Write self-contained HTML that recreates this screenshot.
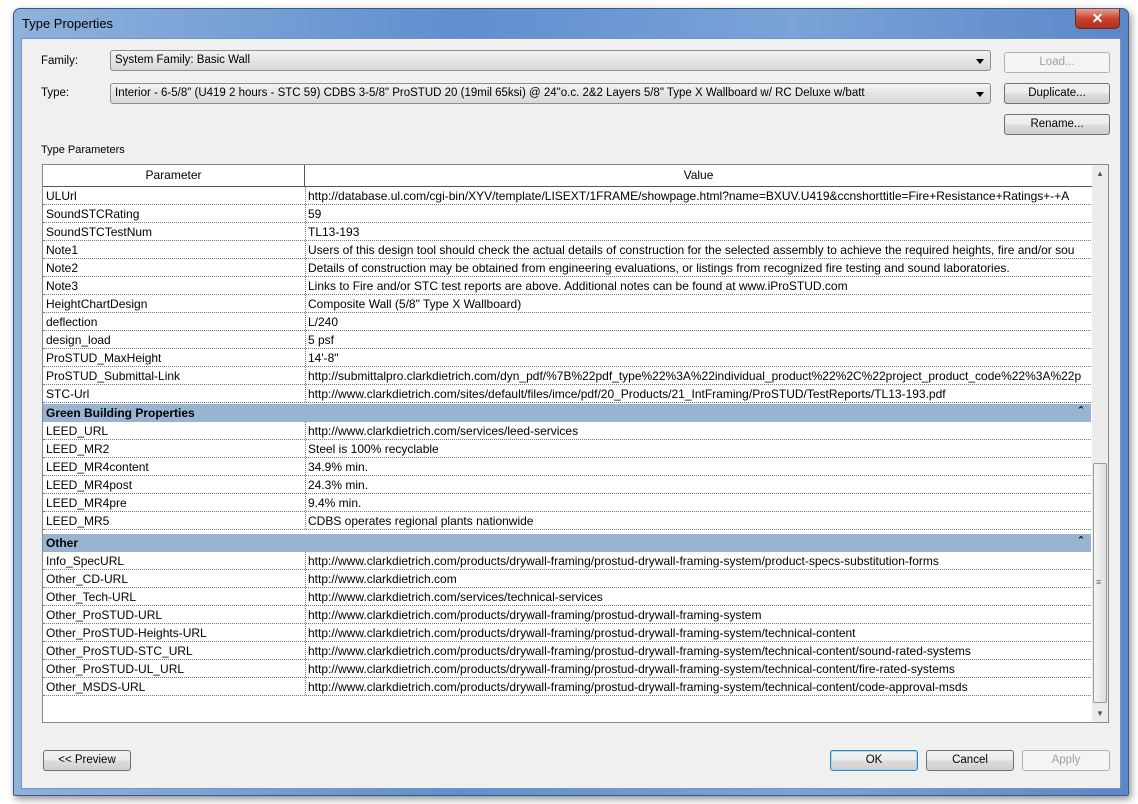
<!DOCTYPE html>
<html><head><style>
*{box-sizing:border-box}
body{margin:0;width:1138px;height:804px;background:#fff;font-family:"Liberation Sans",sans-serif;font-size:11.5px;color:#000;position:relative;overflow:hidden}
.win{position:absolute;left:13px;top:8px;width:1116px;height:788px;border:1px solid #3a5a85;border-radius:7px 7px 2px 2px;background:linear-gradient(90deg,#8fb2dc,#5f8fcf 40%,#7aa3d8 70%,#5a87c8);box-shadow:2px 3px 8px rgba(0,0,0,.45)}
.title{position:absolute;left:8px;top:7px;font-size:13px;color:#000}
.close{position:absolute;right:8px;top:0;width:45px;height:20px;border:1px solid #6b2a20;border-top:none;border-radius:0 0 5px 5px;background:linear-gradient(#e8a090,#c8452f 50%,#b0301c);color:#fff;font-weight:bold;text-align:center;font-size:14px;line-height:18px}
.client{position:absolute;left:7px;top:29px;width:1100px;height:751px;background:#f0f0f0;border:1px solid #7a93b8}
.a{position:absolute}
.combo{position:absolute;left:110px;width:881px;height:21px;border:1px solid #8e8f8f;border-radius:3px;background:linear-gradient(#f4f4f4,#e4e4e4 50%,#d8d8d8);padding:3px 4px;white-space:nowrap;font-size:11.5px}
.combo:after{content:"";position:absolute;right:6px;top:8px;border:4px solid transparent;border-top:5px solid #000}
.btn{position:absolute;height:21px;border:1px solid #707070;border-radius:3px;background:linear-gradient(#f2f2f2,#ebebeb 50%,#dddddd 51%,#cfcfcf);text-align:center;line-height:19px;font-size:11.5px}
.dis{border-color:#adb2b5;background:#f4f4f4;color:#a0a0a0}
.tbl{position:absolute;left:42px;top:164px;width:1067px;height:559px;border:1px solid #828790;background:#fff;overflow:hidden;font-size:12px}
.hdr{position:absolute;left:0;top:0;height:22px;width:1049px;border-bottom:1px solid #555;background:#fff}
.hdr div{position:absolute;top:0;height:21px;line-height:20px;text-align:center}
.row{position:absolute;left:0;width:1048px;height:18px;border-bottom:1px dotted #777;white-space:nowrap}
.row .p{position:absolute;left:3px;top:2px}
.row .v{position:absolute;left:262px;top:0;height:17px;border-left:1px dotted #777;padding:2px 0 0 2px;width:786px;overflow:hidden}
.grp{position:absolute;left:0;width:1048px;height:18px;background:#99b4d1;font-weight:bold;padding:2px 3px}
.grp:after{content:"\02C6";position:absolute;right:8px;top:0;font-size:13px}
.sb{position:absolute;left:1049px;top:0;width:16px;height:557px;background:#ececec}
.thumb{position:absolute;left:1050px;top:298px;width:14px;height:240px;border:1px solid #999;border-radius:2px;background:linear-gradient(90deg,#f4f4f4,#dedede)}
</style></head><body>
<div class="win">
<div class="title">Type Properties</div>
<div class="close">✕</div>
<div class="client"></div>
</div>
<div class="a" style="left:41px;top:55px">Family:</div>
<div class="a" style="left:41px;top:87px">Type:</div>
<div class="combo" style="top:50px">System Family: Basic Wall</div>
<div class="combo" style="top:83px">Interior - 6-5/8" (U419 2 hours - STC 59) CDBS 3-5/8" ProSTUD 20 (19mil 65ksi) @ 24"o.c. 2&amp;2 Layers 5/8" Type X Wallboard w/ RC Deluxe w/batt</div>
<div class="btn dis" style="left:1004px;top:52px;width:106px">Load...</div>
<div class="btn" style="left:1004px;top:83px;width:106px">Duplicate...</div>
<div class="btn" style="left:1004px;top:114px;width:106px">Rename...</div>
<div class="a" style="left:41px;top:144px;font-size:11px">Type Parameters</div>
<div class="tbl">
<div class="hdr"><div style="left:0;width:262px;border-right:1px solid #555">Parameter</div><div style="left:262px;width:787px">Value</div></div>
<div class="row" style="top:22px"><span class="p">ULUrl</span><span class="v">http://database.ul.com/cgi-bin/XYV/template/LISEXT/1FRAME/showpage.html?name=BXUV.U419&amp;ccnshorttitle=Fire+Resistance+Ratings+-+A</span></div>
<div class="row" style="top:40px"><span class="p">SoundSTCRating</span><span class="v">59</span></div>
<div class="row" style="top:58px"><span class="p">SoundSTCTestNum</span><span class="v">TL13-193</span></div>
<div class="row" style="top:76px"><span class="p">Note1</span><span class="v">Users of this design tool should check the actual details of construction for the selected assembly to achieve the required heights, fire and/or sou</span></div>
<div class="row" style="top:94px"><span class="p">Note2</span><span class="v">Details of construction may be obtained from engineering evaluations, or listings from recognized fire testing and sound laboratories.</span></div>
<div class="row" style="top:112px"><span class="p">Note3</span><span class="v">Links to Fire and/or STC test reports are above. Additional notes can be found at www.iProSTUD.com</span></div>
<div class="row" style="top:130px"><span class="p">HeightChartDesign</span><span class="v">Composite Wall (5/8" Type X Wallboard)</span></div>
<div class="row" style="top:148px"><span class="p">deflection</span><span class="v">L/240</span></div>
<div class="row" style="top:166px"><span class="p">design_load</span><span class="v">5 psf</span></div>
<div class="row" style="top:184px"><span class="p">ProSTUD_MaxHeight</span><span class="v">14'-8"</span></div>
<div class="row" style="top:202px"><span class="p">ProSTUD_Submittal-Link</span><span class="v">http://submittalpro.clarkdietrich.com/dyn_pdf/%7B%22pdf_type%22%3A%22individual_product%22%2C%22project_product_code%22%3A%22p</span></div>
<div class="row" style="top:220px"><span class="p">STC-Url</span><span class="v">http://www.clarkdietrich.com/sites/default/files/imce/pdf/20_Products/21_IntFraming/ProSTUD/TestReports/TL13-193.pdf</span></div>
<div class="grp" style="top:239px">Green Building Properties</div>
<div class="row" style="top:257px"><span class="p">LEED_URL</span><span class="v">http://www.clarkdietrich.com/services/leed-services</span></div>
<div class="row" style="top:275px"><span class="p">LEED_MR2</span><span class="v">Steel is 100% recyclable</span></div>
<div class="row" style="top:293px"><span class="p">LEED_MR4content</span><span class="v">34.9% min.</span></div>
<div class="row" style="top:311px"><span class="p">LEED_MR4post</span><span class="v">24.3% min.</span></div>
<div class="row" style="top:329px"><span class="p">LEED_MR4pre</span><span class="v">9.4% min.</span></div>
<div class="row" style="top:347px"><span class="p">LEED_MR5</span><span class="v">CDBS operates regional plants nationwide</span></div>
<div class="grp" style="top:369px">Other</div>
<div class="row" style="top:387px"><span class="p">Info_SpecURL</span><span class="v">http://www.clarkdietrich.com/products/drywall-framing/prostud-drywall-framing-system/product-specs-substitution-forms</span></div>
<div class="row" style="top:405px"><span class="p">Other_CD-URL</span><span class="v">http://www.clarkdietrich.com</span></div>
<div class="row" style="top:423px"><span class="p">Other_Tech-URL</span><span class="v">http://www.clarkdietrich.com/services/technical-services</span></div>
<div class="row" style="top:441px"><span class="p">Other_ProSTUD-URL</span><span class="v">http://www.clarkdietrich.com/products/drywall-framing/prostud-drywall-framing-system</span></div>
<div class="row" style="top:459px"><span class="p">Other_ProSTUD-Heights-URL</span><span class="v">http://www.clarkdietrich.com/products/drywall-framing/prostud-drywall-framing-system/technical-content</span></div>
<div class="row" style="top:477px"><span class="p">Other_ProSTUD-STC_URL</span><span class="v">http://www.clarkdietrich.com/products/drywall-framing/prostud-drywall-framing-system/technical-content/sound-rated-systems</span></div>
<div class="row" style="top:495px"><span class="p">Other_ProSTUD-UL_URL</span><span class="v">http://www.clarkdietrich.com/products/drywall-framing/prostud-drywall-framing-system/technical-content/fire-rated-systems</span></div>
<div class="row" style="top:513px"><span class="p">Other_MSDS-URL</span><span class="v">http://www.clarkdietrich.com/products/drywall-framing/prostud-drywall-framing-system/technical-content/code-approval-msds</span></div>
<div class="sb"></div>
<div class="a" style="left:1053px;top:4px;font-size:8px;color:#555">▲</div>
<div class="thumb"></div>
<div class="a" style="left:1053px;top:412px;font-size:9px;color:#666">≡</div>
<div class="a" style="left:1053px;top:544px;font-size:8px;color:#555">▼</div>
</div>
<div class="btn" style="left:43px;top:750px;width:88px">&lt;&lt; Preview</div>
<div class="btn" style="left:830px;top:750px;width:88px;border-color:#3c7fb1;box-shadow:inset 0 0 0 1px #9ddcf7">OK</div>
<div class="btn" style="left:926px;top:750px;width:88px">Cancel</div>
<div class="btn dis" style="left:1022px;top:750px;width:88px">Apply</div>
</body></html>
